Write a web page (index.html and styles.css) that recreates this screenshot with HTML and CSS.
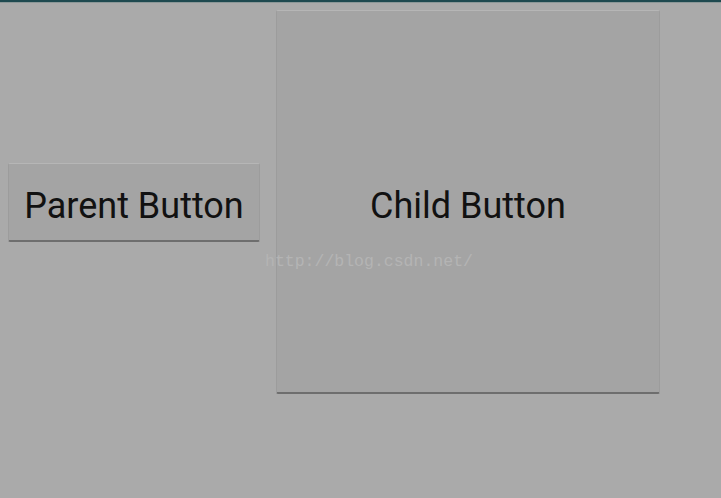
FILE: index.html
```html
<!DOCTYPE html>
<html lang="en">
<head>
    <meta charset="UTF-8">
    <meta name="viewport" content="width=device-width, initial-scale=1.0">
    <title>Button Demo</title>
    <link rel="stylesheet" href="styles.css">
</head>
<body>
    <div class="status-bar"></div>

    <div class="layout">
        <button class="btn parent-btn">Parent Button</button>
        <div class="child-wrap">
            <button class="btn child-btn">Child Button</button>
            <span class="watermark">http://blog.csdn.net/</span>
        </div>
    </div>
</body>
</html>
```

FILE: styles.css
```css
body {
    margin: 0;
    width: 721px;
    height: 498px;
    background: #aaaaaa;
    font-family: Roboto, "Noto Sans", sans-serif;
    overflow: hidden;
}
.status-bar {
    height: 2px;
    background: #1f4a50;
    border-bottom: 1px solid #8c9898;
}
.layout {
    display: flex;
    align-items: center;
    gap: 16px;
    padding: 7px 0 0 8px;
}
.btn {
    font-family: Roboto, "Noto Sans", sans-serif;
    font-size: 36px;
    color: #111111;
    background: #a4a4a4;
    border: 1px solid #9c9c9c;
    border-top-color: #b6b6b6;
    border-bottom: 2px solid #6e6e6e;
    border-radius: 2px;
    padding: 8px 0 0;
    margin: 0;
    box-sizing: border-box;
}
.parent-btn {
    width: 252px;
    height: 79px;
}
.child-wrap {
    position: relative;
}
.child-btn {
    display: block;
    width: 384px;
    height: 384px;
}
.watermark {
    position: absolute;
    left: -11px;
    top: 242px;
    font-family: "Liberation Mono", "DejaVu Sans Mono", monospace;
    font-size: 16.5px;
    color: #b4b4b4;
    white-space: nowrap;
}
```
